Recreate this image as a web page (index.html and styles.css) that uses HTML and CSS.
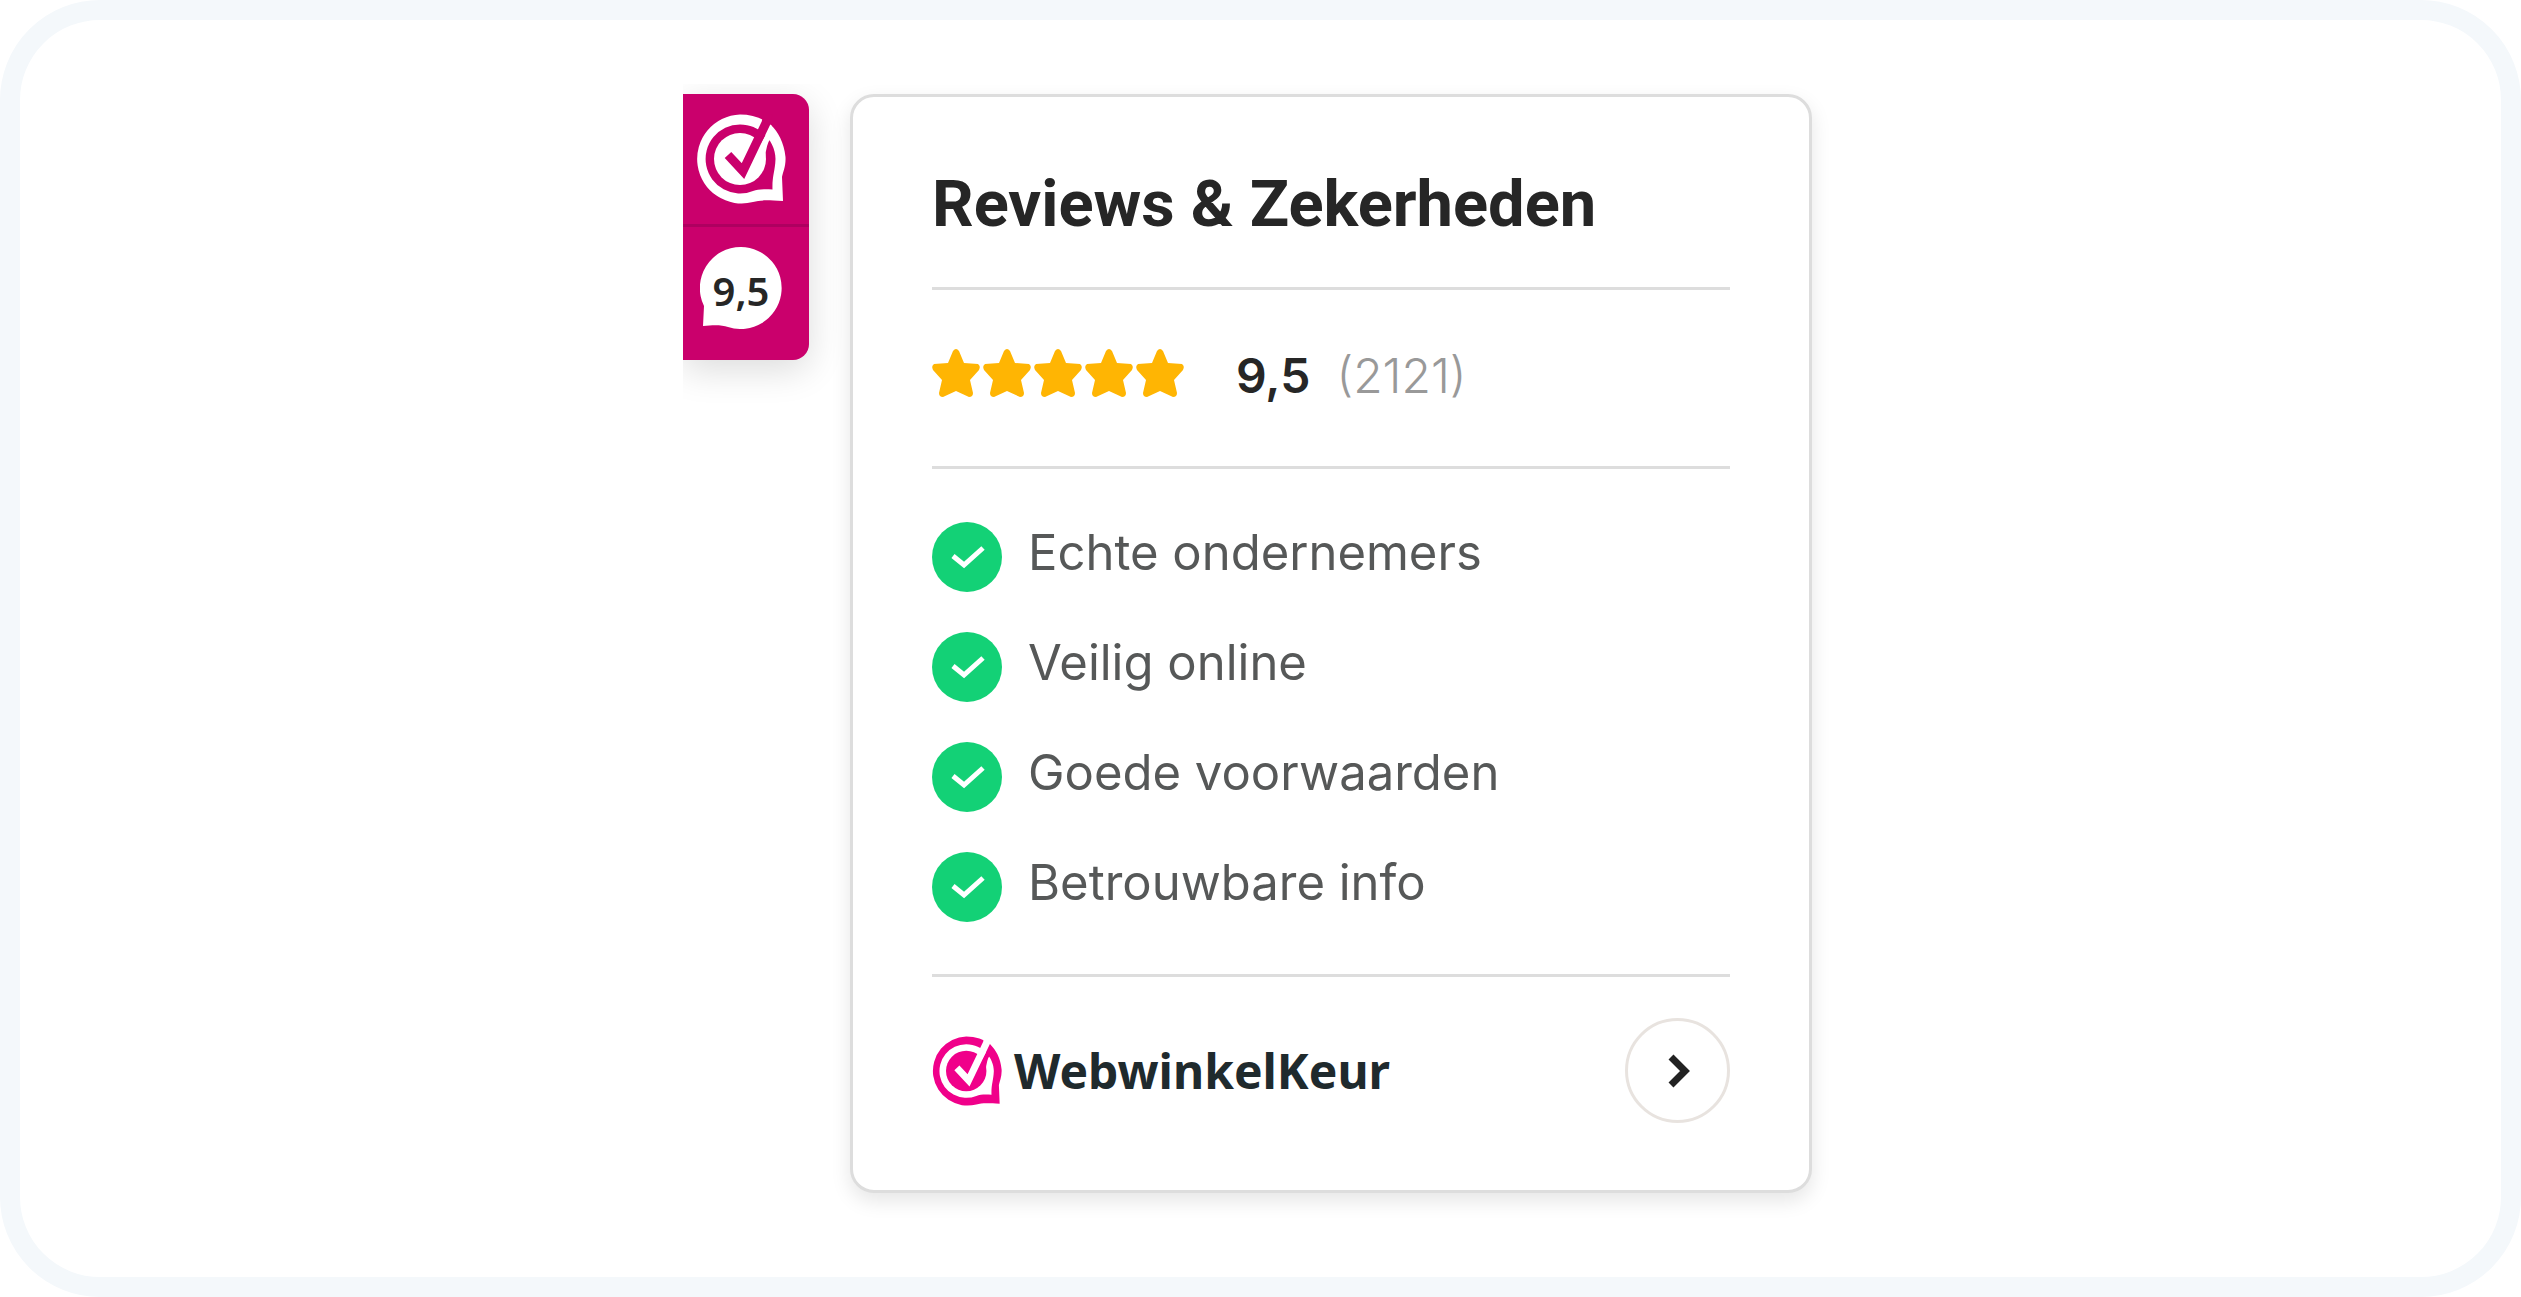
FILE: index.html
```html
<!DOCTYPE html>
<html lang="nl">
<head>
    <meta charset="UTF-8">
    <meta name="viewport" content="width=device-width, initial-scale=1.0">
    <title>Reviews &amp; Zekerheden</title>
    <link rel="stylesheet" href="styles.css">
</head>
<body>
    <!-- Shared icons -->
    <svg class="sprite" aria-hidden="true">
        <symbol id="logo" viewBox="0 0 90 90">
            <path fill="currentColor" fill-rule="evenodd" d="M44 0.5A44.5 44.5 0 1 0 57 88C64 86 70 86 87 87L86 63C87 58 90 52 89.500 43C88 28 82 18 75 11C67 4 56 0.500 44 0.500ZM44 10.500A34.500 34.500 0 1 0 57 77C62 75.500 66 75 76.500 75.500C76 62 79 58 79.500 45C79.500 29 66 10.500 44 10.500Z"/>
            <circle cx="44" cy="45" r="26" fill="currentColor"/>
            <path fill="currentColor" d="M75 11L79 19L75 24Q70 30 69 45L56 56L60 38Z"/>
            <path class="logo-tick" d="M32 41L47 57L70 9L72 0"/>
        </symbol>
        <symbol id="star" viewBox="0 0 48 48">
            <path d="M21 2Q24 -2 27 2L32 14L46 15Q49 17 47 21L38 31L41 44Q41 48 37 48L24 42L11 48Q7 48 7 44L10 31L1 21Q-1 17 2 15L16 14Z"/>
        </symbol>
        <symbol id="check" viewBox="0 0 70 70">
            <circle cx="35" cy="35" r="35" fill="#13d176"/>
            <path d="M21 34L32 43L51 26" fill="none" stroke="#fff" stroke-width="5"/>
        </symbol>
    </svg>

    <main class="frame">
        <div class="widgets">
            <a class="badge" href="#reviews">
                <span class="badge-logo">
                    <svg class="logo" role="img" aria-label="WebwinkelKeur"><use href="#logo"/></svg>
                </span>
                <span class="badge-score">
                    <svg class="bubble" viewBox="0 0 82 82" aria-hidden="true">
                        <path d="M41 0A41 41 0 1 1 28 80C22 78 14 78 3 79L4 59A41 41 0 0 1 41 0Z" fill="#fff"/>
                    </svg>
                    <span class="badge-number">9,5</span>
                </span>
            </a>

            <section class="card" id="reviews">
                <h1 class="title">Reviews &amp; Zekerheden</h1>

                <div class="rating">
                    <div class="stars" role="img" aria-label="5 sterren">
                        <svg><use href="#star"/></svg>
                        <svg><use href="#star"/></svg>
                        <svg><use href="#star"/></svg>
                        <svg><use href="#star"/></svg>
                        <svg><use href="#star"/></svg>
                    </div>
                    <strong class="score">9,5</strong>
                    <span class="count">(2121)</span>
                </div>

                <ul class="checks">
                    <li><svg><use href="#check"/></svg><span>Echte ondernemers</span></li>
                    <li><svg><use href="#check"/></svg><span>Veilig online</span></li>
                    <li><svg><use href="#check"/></svg><span>Goede voorwaarden</span></li>
                    <li><svg><use href="#check"/></svg><span>Betrouwbare info</span></li>
                </ul>

                <footer class="card-footer">
                    <a class="brand" href="#">
                        <svg class="logo"><use href="#logo"/></svg>
                        <span>WebwinkelKeur</span>
                    </a>
                    <button class="next" type="button" aria-label="Volgende">
                        <svg viewBox="0 0 24 36"><path d="M5 4L19 18L5 32"/></svg>
                    </button>
                </footer>
            </section>
        </div>
    </main>
</body>
</html>
```

FILE: styles.css
```css
* {
    box-sizing: border-box;
}
body {
    margin: 0;
    background: #fff;
    color: #262626;
    font-family: "Inter", sans-serif;
}
a {
    color: inherit;
    text-decoration: none;
}
svg {
    display: block;
    flex-shrink: 0;
}
.sprite {
    position: absolute;
    width: 0;
    height: 0;
}
.frame {
    display: flex;
    justify-content: center;
    min-height: 100vh;
    padding: 74px 24px;
    border: 20px solid #f4f8fb;
    border-radius: 100px;
}
.widgets {
    display: flex;
    align-items: flex-start;
    gap: 41px;
    width: 100%;
    max-width: 1155px;
    padding-right: 26px;
}

/* Sidebar badge */
.badge {
    --logo-bg: #ca006c;
    flex-shrink: 0;
    width: 126px;
    background: #ca006c;
    color: #fff;
    border-radius: 0 16px 16px 0;
    box-shadow: 0 10px 36px rgba(0, 0, 0, 0.14);
    clip-path: inset(-10px -40px -50px 0);
}
.badge-logo {
    display: block;
    padding: 20px 13px;
    border-bottom: 3px solid #ae0060;
}
.badge-logo .logo {
    width: 90px;
    height: 90px;
}
.badge-score {
    display: grid;
    align-items: center;
    padding: 20px 27px 31px 17px;
}
.bubble,
.badge-number {
    grid-area: 1 / 1;
}
.bubble {
    width: 82px;
    height: 82px;
}
.badge-number {
    padding-top: 6px;
    color: #262626;
    font-family: "Noto Sans", sans-serif;
    font-size: 40px;
    font-weight: 600;
    line-height: 48px;
    text-align: center;
}
.logo-tick {
    fill: none;
    stroke: var(--logo-bg);
    stroke-width: 9px;
}

/* Card */
.card {
    flex: 1;
    padding: 0 79px;
    background: #fff;
    border: 3px solid #ddd;
    border-radius: 24px;
    box-shadow: 0 8px 20px rgba(0, 0, 0, 0.1);
}
.title {
    margin: 0;
    padding: 67px 0 43px;
    font-family: "Roboto", sans-serif;
    font-size: 65px;
    font-weight: 700;
    line-height: 80px;
}
.rating {
    display: flex;
    align-items: flex-start;
    padding: 59px 0 69px;
    border-top: 3px solid #ddd;
    font-size: 48px;
    line-height: 54px;
}
.stars {
    display: flex;
    gap: 3px;
    margin-right: 52px;
    fill: #ffb503;
}
.stars svg {
    width: 48px;
    height: 48px;
}
.rating {
    height: 179px;
}
.score {
    margin-right: 26px;
    font-weight: 600;
}
.count {
    color: #999;
    font-weight: 300;
}
.checks {
    display: flex;
    flex-direction: column;
    gap: 40px;
    margin: 0;
    padding: 53px 0 52px;
    border-top: 3px solid #ddd;
    list-style: none;
}
.checks li {
    display: flex;
    gap: 26px;
    color: #565858;
    font-size: 49px;
    line-height: 62px;
}
.checks svg {
    width: 70px;
    height: 70px;
}
.card-footer {
    display: flex;
    align-items: center;
    justify-content: space-between;
    padding: 41px 0 67px;
    border-top: 3px solid #ddd;
}
.brand {
    --logo-bg: #fff;
    display: flex;
    align-items: center;
    gap: 12px;
    color: #1f2a2d;
    font-family: "Noto Sans", sans-serif;
    font-size: 48px;
    font-weight: 700;
    line-height: 70px;
}
.brand .logo {
    width: 70px;
    height: 70px;
    color: #f0008a;
}
.next {
    display: flex;
    align-items: center;
    justify-content: center;
    width: 105px;
    height: 105px;
    padding: 0;
    background: #fff;
    border: 3px solid #e8e3df;
    border-radius: 50%;
    cursor: pointer;
}
.next svg {
    width: 24px;
    height: 36px;
    fill: none;
    stroke: #222;
    stroke-width: 7px;
}
```
